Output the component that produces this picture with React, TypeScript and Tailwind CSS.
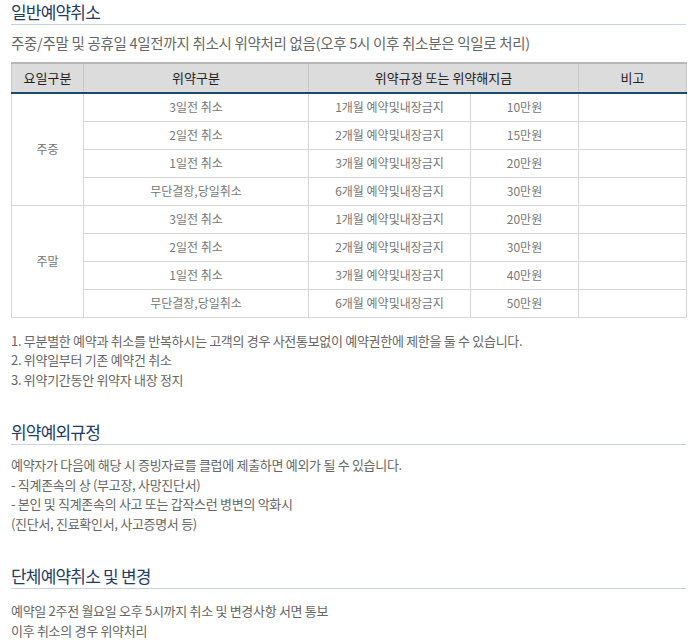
import React from "react";

const font = { fontFamily: '"Noto Sans CJK KR", "Noto Sans", sans-serif' };

function Title({ children }: { children: React.ReactNode }) {
  return (
    <div className="border-b border-[#c8d2dc]">
      <h2 className="text-[17px] leading-[24px] text-[#1e3c63] tracking-[-0.8px]">{children}</h2>
    </div>
  );
}

const rows = [
  ["3일전 취소", "1개월 예약및내장금지"],
  ["2일전 취소", "2개월 예약및내장금지"],
  ["1일전 취소", "3개월 예약및내장금지"],
  ["무단결장,당일취소", "6개월 예약및내장금지"],
];

const groups = [
  { name: "주중", fees: ["10만원", "15만원", "20만원", "30만원"] },
  { name: "주말", fees: ["20만원", "30만원", "40만원", "50만원"] },
];

export default function App() {
  return (
    <div className="bg-white w-[700px] min-h-[643px] pl-[11px] pr-[14px] text-[13px] text-[#666]" style={font}>
      <Title>일반예약취소</Title>
      <p className="mt-[8px] text-[14.5px] leading-[20px] tracking-[-0.3px]">
        주중/주말 및 공휴일 4일전까지 취소시 위약처리 없음(오후 5시 이후 취소분은 익일로 처리)
      </p>
      <table className="mt-[9px] w-[675px] border-collapse table-fixed text-center">
        <colgroup>
          <col className="w-[72px]" />
          <col className="w-[225px]" />
          <col className="w-[162px]" />
          <col className="w-[108px]" />
          <col className="w-[108px]" />
        </colgroup>
        <thead>
          <tr className="bg-[#dcdcdc] h-[30px] border-t-2 border-t-[#b8b8b8] border-b-2 border-b-[#1c4a6e]">
            <th className="font-normal text-[#222] border-x border-[#c8c8c8]">요일구분</th>
            <th className="font-normal text-[#222] border-x border-[#c8c8c8]">위약구분</th>
            <th colSpan={2} className="font-normal text-[#222] border-x border-[#c8c8c8]">위약규정 또는 위약해지금</th>
            <th className="font-normal text-[#222] border-x border-[#c8c8c8]">비고</th>
          </tr>
        </thead>
        <tbody className="text-[12px] text-[#777]">
          {groups.map((g) =>
            rows.map((r, i) => (
              <tr key={g.name + i} className="h-[28px]">
                {i === 0 && (
                  <td rowSpan={4} className="border border-[#d5d5d5]">
                    {g.name}
                  </td>
                )}
                <td className="border border-[#d5d5d5]">{r[0]}</td>
                <td className="border border-[#d5d5d5]">{r[1]}</td>
                <td className="border border-[#d5d5d5]">{g.fees[i]}</td>
                <td className="border border-[#d5d5d5]"></td>
              </tr>
            ))
          )}
        </tbody>
      </table>
      <div className="mt-[13px] leading-[19.5px] tracking-[-0.3px]">
        <p>1. 무분별한 예약과 취소를 반복하시는 고객의 경우 사전통보없이 예약권한에 제한을 둘 수 있습니다.</p>
        <p>2. 위약일부터 기존 예약건 취소</p>
        <p>3. 위약기간동안 위약자 내장 정지</p>
      </div>
      <div className="mt-[31px]">
        <Title>위약예외규정</Title>
      </div>
      <div className="mt-[10px] leading-[19.5px] tracking-[-0.3px]">
        <p>예약자가 다음에 해당 시 증빙자료를 클럽에 제출하면 예외가 될 수 있습니다.</p>
        <p>- 직계존속의 상 (부고장, 사망진단서)</p>
        <p>- 본인 및 직계존속의 사고 또는 갑작스런 병변의 악화시</p>
        <p>(진단서, 진료확인서, 사고증명서 등)</p>
      </div>
      <div className="mt-[31px]">
        <Title>단체예약취소 및 변경</Title>
      </div>
      <div className="mt-[12px] leading-[20px] tracking-[-0.3px]">
        <p>예약일 2주전 월요일 오후 5시까지 취소 및 변경사항 서면 통보</p>
        <p>이후 취소의 경우 위약처리</p>
      </div>
    </div>
  );
}
